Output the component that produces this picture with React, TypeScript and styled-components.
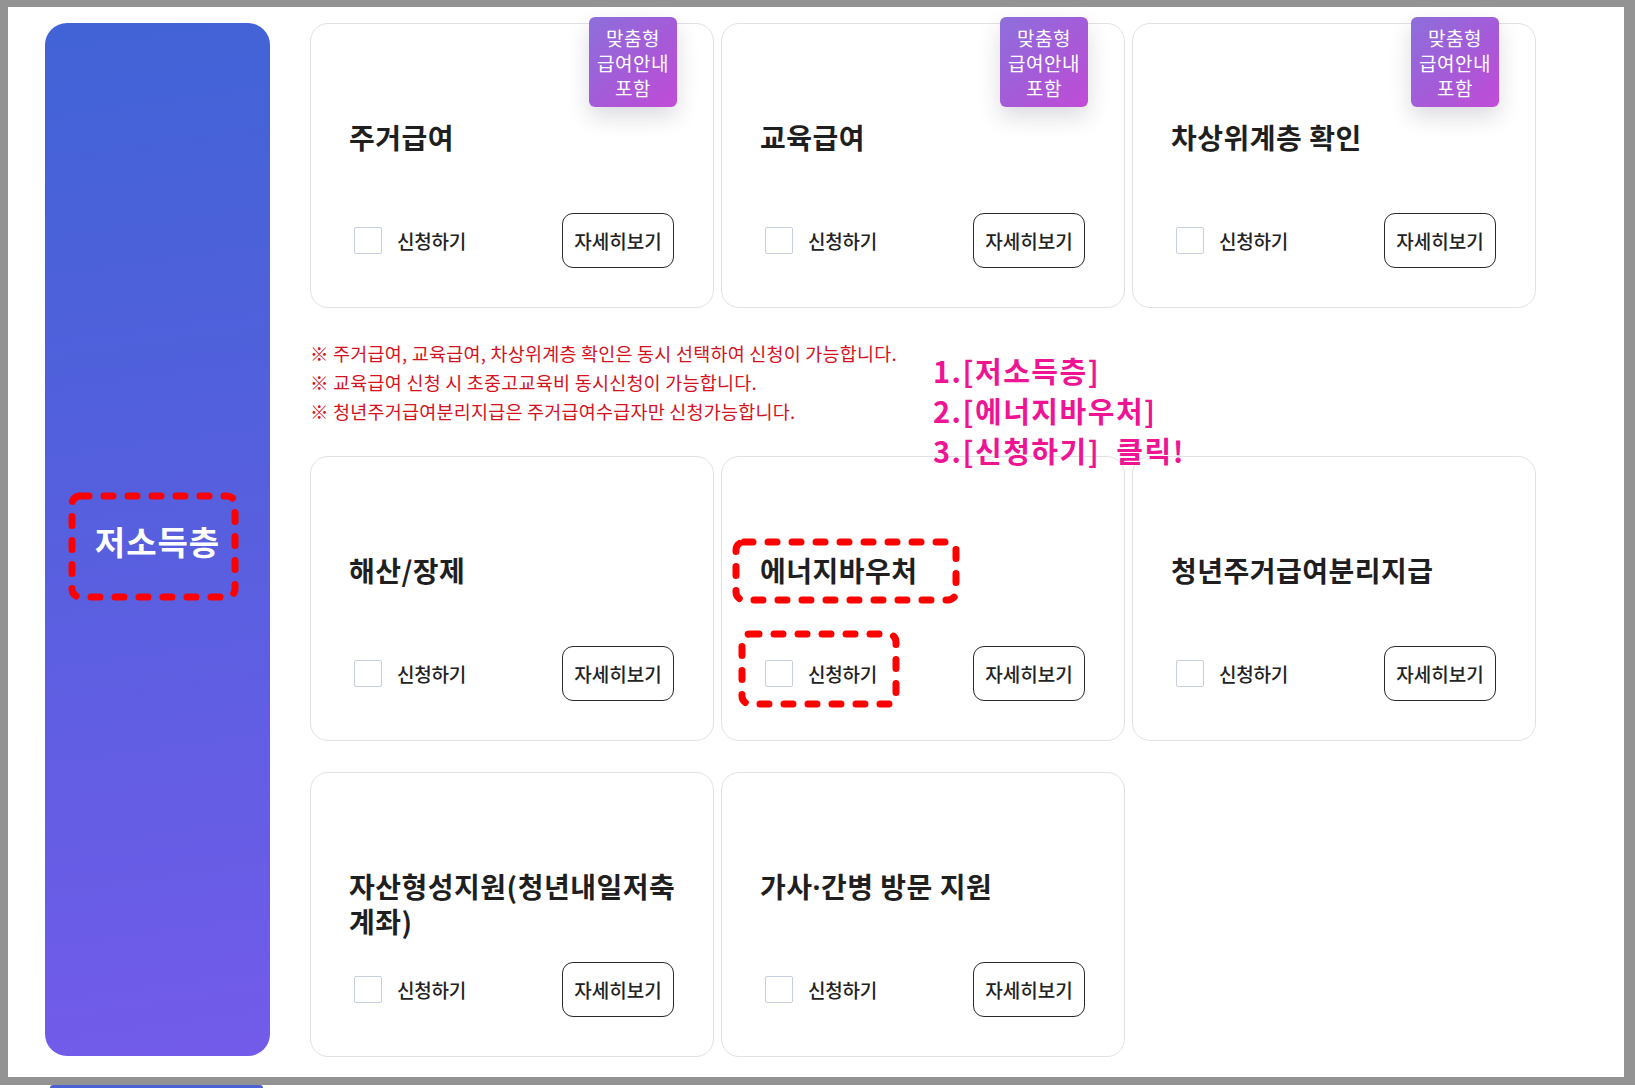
import type { ReactNode } from "react";
import styled, { createGlobalStyle } from "styled-components";

const GlobalStyle = createGlobalStyle`
  html, body {
    margin: 0;
    padding: 0;
    background: #fff;
  }
  body {
    font-family: "Noto Sans CJK KR", "Noto Sans", sans-serif;
    color: #222;
  }
`;

const Frame = styled.div`
  box-sizing: border-box;
  width: 1635px;
  height: 1085px;
  border-style: solid;
  border-color: #939393;
  border-width: 7px 11px 8px 8px;
  padding: 16px 0 0 37px;
  display: flex;
  gap: 40px;
  background: #fff;
`;

const Sidebar = styled.aside`
  width: 225px;
  height: 1033px;
  border-radius: 22px;
  background: linear-gradient(172deg, #4163d6 0%, #5a5fe0 55%, #735bea 100%);
  display: flex;
  align-items: center;
  justify-content: center;
`;

const SideLabel = styled.span`
  position: relative;
  display: inline-block;
  color: #fff;
  font-size: 33px;
  line-height: 40px;
  font-weight: 700;
  letter-spacing: 1px;
  margin-top: 2px;
`;

// dashed red marker drawn over content
const DashFrame = styled.svg<{ $top: number; $left: number }>`
  position: absolute;
  top: ${(p) => p.$top}px;
  left: ${(p) => p.$left}px;
  overflow: visible;
  pointer-events: none;

  & rect {
    fill: none;
    stroke: #ff0000;
    stroke-width: 7;
    stroke-dasharray: 9 15;
    stroke-linecap: round;
  }
`;

const Main = styled.main`
  position: relative;
  width: 1227px;
  display: flex;
  flex-direction: column;
`;

const CardGrid = styled.div`
  display: grid;
  grid-template-columns: repeat(3, 404px);
  column-gap: 7px;
  row-gap: 31px;
`;

const Card = styled.div`
  position: relative;
  box-sizing: border-box;
  height: 285px;
  border: 1px solid #e2e2e6;
  border-radius: 18px;
  padding: 96px 39px 39px 38px;
  display: flex;
  flex-direction: column;
  background: #fff;
`;

const Badge = styled.div`
  position: absolute;
  top: -7px;
  right: 36px;
  box-sizing: border-box;
  width: 88px;
  height: 90px;
  border-radius: 6px;
  background: linear-gradient(135deg, #8d6fdb 0%, #a65ad8 55%, #c24bd7 100%);
  box-shadow: 0 10px 22px rgba(40, 40, 70, 0.16);
  color: #fff;
  font-size: 19px;
  line-height: 25px;
  letter-spacing: 0.5px;
  text-align: center;
  display: flex;
  flex-direction: column;
  justify-content: center;
`;

const Title = styled.h3`
  position: relative;
  margin: 0 -12px 0 0;
  font-size: 28px;
  line-height: 35px;
  font-weight: 700;
  letter-spacing: 0.5px;
  color: #1f1f1f;
`;

const TitleText = styled.span`
  position: relative;
`;

// narrow latin middle dot, as in the original
const Interpunct = styled.span`
  font-family: "Noto Sans", sans-serif;
`;

const ActionRow = styled.div`
  margin-top: auto;
  padding-left: 5px;
  display: flex;
  align-items: center;
  justify-content: space-between;
`;

const Apply = styled.label`
  position: relative;
  display: flex;
  align-items: center;
  gap: 15px;
  font-size: 19px;
  font-weight: 500;
  letter-spacing: -0.2px;
  color: #222;
`;

const Check = styled.span`
  box-sizing: border-box;
  width: 28px;
  height: 27px;
  border: 1px solid #c6cee0;
  border-radius: 2px;
  background: #fff;
`;

const DetailButton = styled.button`
  box-sizing: border-box;
  width: 112px;
  height: 55px;
  border: 1px solid #2a2a2a;
  border-radius: 11px;
  background: #fff;
  font-family: inherit;
  font-size: 19px;
  font-weight: 500;
  letter-spacing: 0;
  color: #222;
  padding: 0;
`;

const Notes = styled.div`
  box-sizing: border-box;
  height: 148px;
  padding-top: 31px;
  color: #d4121e;
  font-size: 18.5px;
  line-height: 29px;
  letter-spacing: 0.22px;

  & p {
    margin: 0;
  }
`;

const Callout = styled.div`
  position: absolute;
  left: 623px;
  top: 327px;
  color: #ee1493;
  font-size: 29px;
  line-height: 40px;
  font-weight: 700;
  letter-spacing: 1.5px;
  white-space: pre;

  & p {
    margin: 0;
  }
`;

const Below = styled.div`
  height: 3px;
  padding-left: 50px;
`;

const BelowBar = styled.div`
  width: 213px;
  height: 3px;
  border-radius: 3px 3px 0 0;
  background: #4b62d6;
`;

type Mark = { top: number; left: number; w: number; h: number };

type Benefit = {
  id: string;
  title: ReactNode;
  badge?: boolean;
  titleMark?: Mark;
  applyMark?: Mark;
};

const Dashed = ({ mark }: { mark: Mark }) => (
  <DashFrame $top={mark.top} $left={mark.left} width={mark.w} height={mark.h}>
    <rect x={0} y={0} width={mark.w} height={mark.h} rx={8} ry={8} />
  </DashFrame>
);

const topRow: Benefit[] = [
  { id: "housing", title: "주거급여", badge: true },
  { id: "education", title: "교육급여", badge: true },
  { id: "nearpoor", title: "차상위계층 확인", badge: true },
];

const restRows: Benefit[] = [
  { id: "birth", title: "해산/장제" },
  {
    id: "energy",
    title: "에너지바우처",
    titleMark: { top: -8, left: -24, w: 220, h: 58 },
    applyMark: { top: -26, left: -23, w: 154, h: 70 },
  },
  { id: "youth", title: "청년주거급여분리지급" },
  { id: "asset", title: "자산형성지원(청년내일저축계좌)" },
  {
    id: "care",
    title: (
      <>
        가사<Interpunct>·</Interpunct>간병 방문 지원
      </>
    ),
  },
];

const BenefitCard = ({ item }: { item: Benefit }) => (
  <Card>
    {item.badge && (
      <Badge>
        <span>맞춤형</span>
        <span>급여안내</span>
        <span>포함</span>
      </Badge>
    )}
    <Title>
      <TitleText>
        {item.title}
        {item.titleMark && <Dashed mark={item.titleMark} />}
      </TitleText>
    </Title>
    <ActionRow>
      <Apply>
        <Check />
        신청하기
        {item.applyMark && <Dashed mark={item.applyMark} />}
      </Apply>
      <DetailButton type="button">자세히보기</DetailButton>
    </ActionRow>
  </Card>
);

const App = () => {
  return (
    <>
      <GlobalStyle />
      <Frame>
        <Sidebar>
          <SideLabel>
            저소득층
            <Dashed mark={{ top: -25, left: -23, w: 163, h: 101 }} />
          </SideLabel>
        </Sidebar>
        <Main>
          <CardGrid>
            {topRow.map((item) => (
              <BenefitCard key={item.id} item={item} />
            ))}
          </CardGrid>
          <Notes>
            <p>※ 주거급여, 교육급여, 차상위계층 확인은 동시 선택하여 신청이 가능합니다.</p>
            <p>※ 교육급여 신청 시 초중고교육비 동시신청이 가능합니다.</p>
            <p>※ 청년주거급여분리지급은 주거급여수급자만 신청가능합니다.</p>
          </Notes>
          <CardGrid>
            {restRows.map((item) => (
              <BenefitCard key={item.id} item={item} />
            ))}
          </CardGrid>
          <Callout>
            <p>1.[저소득층]</p>
            <p>2.[에너지바우처]</p>
            <p>3.[신청하기]  클릭!</p>
          </Callout>
        </Main>
      </Frame>
      <Below>
        <BelowBar />
      </Below>
    </>
  );
};

export default App;
